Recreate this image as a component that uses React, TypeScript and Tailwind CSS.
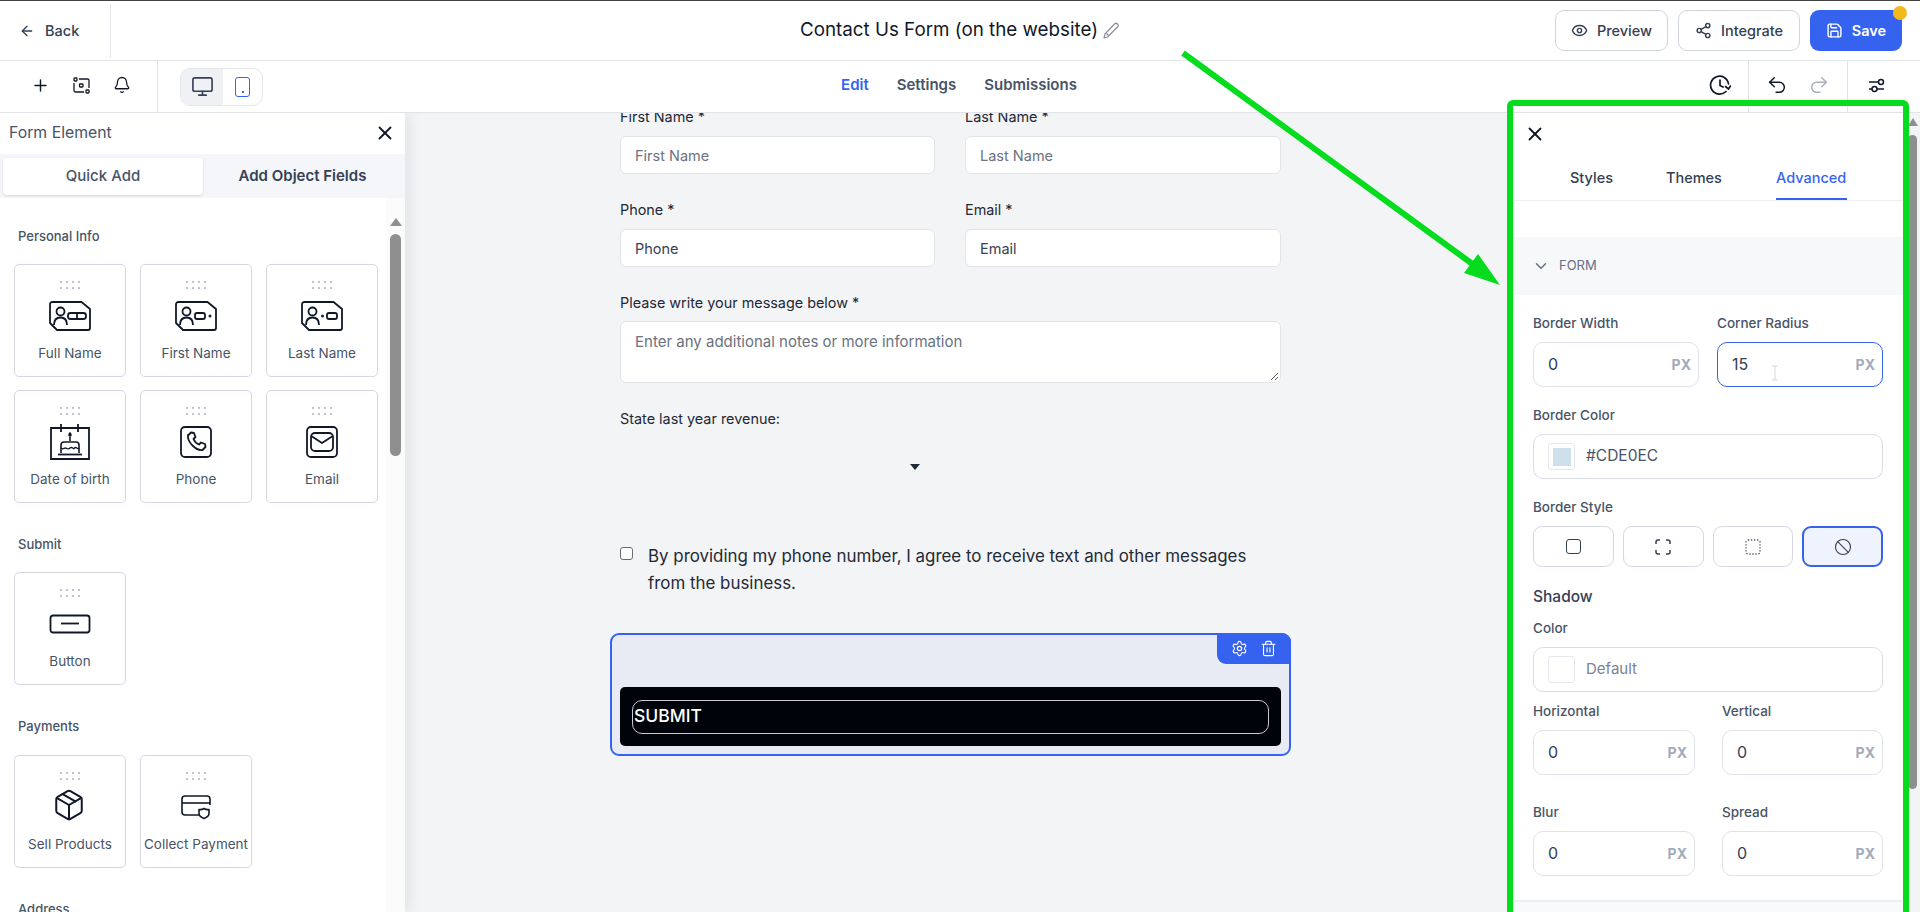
import React from "react";
import { ArrowLeft, Eye, Share2, Save, Plus, Bell, Monitor, X, ChevronDown, Undo2, Redo2, Settings, Trash2, Package, Ban } from "lucide-react";

const Dots = () => (
  <svg width="20" height="8" viewBox="0 0 20 8" className="shrink-0">
    {[1, 7, 13, 19].map((x) => [1, 7].map((y) => <circle key={`${x}${y}`} cx={x} cy={y} r="1.1" fill="#b6bccb" />))}
  </svg>
);

const IdIcon = ({ kind }: { kind: "full" | "first" | "last" }) => (
  <svg width="42" height="30" viewBox="0 0 42 30" fill="none" stroke="#101828" strokeWidth="1.8" strokeLinejoin="round">
    <path d="M3.500 1H32.500L41 8V27a2 2 0 0 1-2 2H8L1 22V3.500a2.500 2.500 0 0 1 2.500-2.500Z" />
    <circle cx="11.500" cy="10.500" r="4" />
    <path d="M5 24c0-5 2.500-7.500 6.500-7.500s6.500 2.500 6.500 7.500" />
    {kind === "full" && <><rect x="19" y="12" width="18" height="6" rx="2.500" /><path d="M28 12v6" /></>}
    {kind === "first" && <><rect x="20" y="12" width="10" height="6" rx="2" /><circle cx="35" cy="15" r=".6" /></>}
    {kind === "last" && <><rect x="26" y="12" width="10" height="6" rx="2" /><circle cx="21.500" cy="15" r=".6" /></>}
  </svg>
);

const CakeIcon = () => (
  <svg width="42" height="36" viewBox="0 0 42 36" fill="none" stroke="#101828" strokeWidth="1.6">
    <path d="M2 4H40V35H2Z" strokeWidth="1.800" />
    <path d="M12 0V8M29 0V8" strokeWidth="1.800" />
    <path d="M21 9c-1.500 1.500-1 3 0 3s1.500-1.500 0-3Z" fill="#101828" />
    <path d="M21 13v4" />
    <path d="M12 29V21a3 3 0 0 1 3-3H27a3 3 0 0 1 3 3V29" />
    <path d="M12 24c2 2 3 0 4.500 0s2 2 4.500 0 3 2 4.500 0 3 2 4.500 0" strokeWidth="1.300" />
    <path d="M9 30.500H33" strokeWidth="1.800" />
  </svg>
);

const PhoneIcon = () => (
  <svg width="32" height="32" viewBox="0 0 32 32" fill="none" stroke="#101828" strokeWidth="1.800" strokeLinejoin="round">
    <rect x="1" y="1" width="30" height="30" rx="4" />
    <path d="M8 9.500 11 6.500l3 .5 1.500 4-2 2c1 2.500 3 4.500 5.500 5.500l2-2 4 1.500.5 3-3 3c-3 .5-7-1.500-10-4.500s-5-7-4.500-10.500Z" />
  </svg>
);

const MailIcon = () => (
  <svg width="32" height="32" viewBox="0 0 32 32" fill="none" stroke="#101828" strokeWidth="1.800" strokeLinejoin="round">
    <rect x="1" y="1" width="30" height="30" rx="4" />
    <rect x="5" y="7" width="22" height="18" rx="4" />
    <path d="M6 10.500 16 17l10-6.500" />
  </svg>
);

const ButtonIcon = () => (
  <svg width="42" height="20" viewBox="0 0 42 20" fill="none" stroke="#101828" strokeWidth="1.800">
    <rect x="1.500" y="1.500" width="39" height="17" rx="2.500" />
    <path d="M12 9.500H30" />
  </svg>
);

const CardShieldIcon = () => (
  <svg width="32" height="26" viewBox="0 0 32 26" fill="none" stroke="#101828" strokeWidth="1.600" strokeLinejoin="round">
    <path d="M20 21H5a3 3 0 0 1-3-3V5a3 3 0 0 1 3-3H27a3 3 0 0 1 3 3V11" />
    <path d="M2 9H30" />
    <path d="M24 14.500c1.500 1 3.500 1.200 5 1v4c0 2.500-2.500 4-5 5-2.500-1-5-2.500-5-5v-4c1.500.2 3.500 0 5-1Z" />
  </svg>
);

const FieldsIcon = () => (
  <svg width="17" height="17" viewBox="0 0 17 17" fill="none" stroke="#101828" strokeWidth="1.300">
    <rect x="1" y="1" width="3" height="3" rx=".7" />
    <rect x="6.500" y="7" width="3.500" height="3" rx=".7" />
    <rect x="13" y="13" width="3" height="3" rx=".7" />
    <path d="M6 2H14.500a1.500 1.500 0 0 1 1.500 1.500V11M11 15H2.500A1.500 1.500 0 0 1 1 13.500V6" />
  </svg>
);

const HistoryIcon = () => (
  <svg width="22" height="22" viewBox="0 0 22 22" fill="none" stroke="#101828" strokeWidth="1.700" strokeLinecap="round">
    <path d="M19.500 10A9 9 0 1 0 17 17.500" />
    <path d="M11 6V11.500L14 13" />
    <path d="M16.500 12.500 19.500 15l2-3" />
  </svg>
);

const SlidersIcon = () => (
  <svg width="17" height="15" viewBox="0 0 17 15" fill="none" stroke="#101828" strokeWidth="1.500">
    <path d="M1 4H10M1 11H4M9 11H16" />
    <circle cx="13" cy="4" r="2.500" />
    <circle cx="6.500" cy="11" r="2.500" />
  </svg>
);

const PencilIcon = () => (
  <svg width="18" height="18" viewBox="0 0 18 18" fill="none" stroke="#8a8f98" strokeWidth="1.200" strokeLinejoin="round">
    <path d="M3 12 12.500 2a2 2 0 0 1 3 3L5.500 15 2 16Z" />
    <path d="M4.500 11.500 6.500 13.500" />
  </svg>
);

const cardClass = "w-[112px] h-[113px] rounded-[5px] border border-[#d5d8e3] bg-white flex flex-col items-center pt-[16px]";

const Card = ({ label, icon }: { label: string; icon: React.ReactNode }) => (
  <div className={cardClass}>
    <Dots />
    <div className="h-[49px] mt-[2px] flex items-center justify-center">{icon}</div>
    <div className="mt-[5px] text-[13.500px] leading-[16px] text-[#475467] whitespace-nowrap">{label}</div>
  </div>
);

const SectionTitle = ({ children, className }: { children: React.ReactNode; className: string }) => (
  <div className={`pl-[18px] text-[13px] leading-[20px] text-[#475467] font-medium ${className}`}>{children}</div>
);

const UnitInput = ({ value, focus }: { value: string; focus?: boolean }) => (
  <div className={`h-[45px] rounded-[10px] border bg-white flex items-center justify-between pl-[14px] pr-[7px] pb-[1px] ${focus ? "border-[#3563f0]" : "border-[#e0e2ea]"}`}>
    <span className="text-[16px] text-[#344054]">{value}</span>
    <span className="text-[14px] font-bold text-[#a3abbb]">PX</span>
  </div>
);

const PanelLabel = ({ children }: { children: React.ReactNode }) => (
  <div className="h-[20px] mb-[9px] text-[13.500px] leading-[20px] font-medium text-[#475467]">{children}</div>
);

const FormField = ({ label, placeholder, dark }: { label: string; placeholder: string; dark?: boolean }) => (
  <div>
    <div className="h-[20px] mb-[9px] text-[14.400px] leading-[20px] text-[#1f2937]">{label}</div>
    <div className={`h-[38px] rounded-[6px] border border-[#e2e4e9] bg-white flex items-center pl-[14px] pt-[1px] text-[14.500px] ${dark ? "text-[#374151]" : "text-[#6b7280]"}`}>{placeholder}</div>
  </div>
);

export default function App() {
  return (
    <div className="relative w-[1920px] h-[912px] overflow-hidden bg-white flex flex-col font-['Inter',sans-serif] text-[#101828]">
      <div className="h-[1px] shrink-0 bg-[#444444]" />

      <header className="h-[60px] shrink-0 border-b border-[#e4e5e8] grid grid-cols-[1fr_auto_1fr] items-center">
        <div className="h-full flex items-center">
          <div className="w-[111px] h-[54px] border-r border-[#e1e3e8] flex items-center pl-[19px] gap-[10px]">
            <ArrowLeft size={16} color="#344054" />
            <span className="text-[14.500px] font-medium text-[#344054]">Back</span>
          </div>
        </div>
        <div className="flex items-center gap-[4px]">
          <span className="text-[18.800px] text-[#101828]">Contact Us Form (on the website)</span>
          <PencilIcon />
        </div>
        <div className="flex justify-end items-center gap-[10px] pr-[18px]">
          <button className="h-[41px] w-[113px] rounded-[9px] border border-[#d0d5dd] flex items-center justify-center gap-[9px] text-[14.500px] font-medium text-[#344054]">
            <Eye size={17} />Preview
          </button>
          <button className="h-[41px] w-[122px] rounded-[9px] border border-[#d0d5dd] flex items-center justify-center gap-[9px] text-[14.500px] font-medium text-[#344054]">
            <Share2 size={17} />Integrate
          </button>
          <div className="relative">
            <button className="h-[41px] w-[92px] rounded-[9px] bg-[#3563f0] flex items-center justify-center gap-[9px] text-[14.500px] font-semibold text-white">
              <Save size={17} />Save
            </button>
            <span className="absolute -top-[4px] -right-[5px] w-[14px] h-[14px] rounded-full bg-[#f2b91d]" />
          </div>
        </div>
      </header>

      <div className="h-[52px] shrink-0 border-b border-[#e1e3e8] grid grid-cols-[1fr_auto_1fr] items-center">
        <div className="h-full flex items-center">
          <div className="w-[158px] h-full border-r border-[#e1e3e8] flex items-center pl-[31px] pb-[3px] gap-[23px]">
            <Plus size={19} strokeWidth={1.800} color="#101828" />
            <FieldsIcon />
            <Bell size={18} strokeWidth={1.700} color="#101828" />
          </div>
          <div className="ml-[22px] w-[83px] h-[38px] rounded-[10px] border border-[#e4e7ec] overflow-hidden flex">
            <div className="w-[42px] bg-[#f0f1f5] flex items-center justify-center"><Monitor size={23} strokeWidth={1.700} color="#344054" /></div>
            <div className="flex-1 flex items-center justify-center">
              <div className="w-[15px] h-[20px] rounded-[3px] border-[1.500px] border-[#3563f0] flex items-end justify-center pb-[3px]">
                <div className="w-[2px] h-[2px] bg-[#3563f0]" />
              </div>
            </div>
          </div>
        </div>
        <div className="flex items-center gap-[28px] pb-[2px] pr-[2px] text-[15px] font-semibold text-[#475467]">
          <span className="text-[#3563f0]">Edit</span>
          <span>Settings</span>
          <span>Submissions</span>
        </div>
        <div className="h-full flex justify-end items-center">
          <div className="h-full w-[56px] pb-[3px] flex items-center justify-center"><HistoryIcon /></div>
          <div className="h-full w-[100px] border-x border-[#e1e3e8] pb-[3px] flex items-center justify-center gap-[20px]">
            <Undo2 size={22} strokeWidth={1.600} color="#101828" />
            <Redo2 size={22} strokeWidth={1.600} color="#a9b0bb" />
          </div>
          <div className="h-full w-[72px] pb-[3px] flex items-center pl-[20px]"><SlidersIcon /></div>
        </div>
      </div>

      <main className="flex-1 min-h-0 flex overflow-hidden">
        <aside className="w-[405px] shrink-0 bg-white flex flex-col relative z-10 shadow-[4px_0_14px_rgba(16,24,40,0.08)] rounded-tr-[4px]">
          <div className="h-[41px] flex items-center justify-between pl-[9px] pr-[9px] pb-[1px]">
            <span className="text-[15.800px] text-[#475467]">Form Element</span>
            <X size={22} color="#101828" />
          </div>
          <div className="h-[44px] bg-[#f5f6f9] flex items-center pl-[3px]">
            <div className="w-[200px] h-[37px] rounded-[4px] bg-white shadow-sm flex items-center justify-center pt-[1px] text-[15px] font-medium text-[#475467]">Quick Add</div>
            <div className="flex-1 flex items-center justify-center pr-[3px] pt-[1px] text-[15px] font-semibold text-[#344054]">Add Object Fields</div>
          </div>
          <div className="flex-1 min-h-0 flex overflow-hidden">
            <div className="flex-1 overflow-hidden">
              <SectionTitle className="mt-[28px]">Personal Info</SectionTitle>
              <div className="ml-[14px] mt-[18px] grid grid-cols-[112px_112px_112px] gap-x-[14px] gap-y-[13px]">
                <Card label="Full Name" icon={<IdIcon kind="full" />} />
                <Card label="First Name" icon={<IdIcon kind="first" />} />
                <Card label="Last Name" icon={<IdIcon kind="last" />} />
                <Card label="Date of birth" icon={<CakeIcon />} />
                <Card label="Phone" icon={<PhoneIcon />} />
                <Card label="Email" icon={<MailIcon />} />
              </div>
              <SectionTitle className="mt-[31px]">Submit</SectionTitle>
              <div className="ml-[14px] mt-[18px]"><Card label="Button" icon={<ButtonIcon />} /></div>
              <SectionTitle className="mt-[31px]">Payments</SectionTitle>
              <div className="ml-[14px] mt-[19px] flex gap-[14px]">
                <Card label="Sell Products" icon={<Package size={34} strokeWidth={1.400} color="#101828" className="-mt-[3px] -ml-[2px]" />} />
                <Card label="Collect Payment" icon={<CardShieldIcon />} />
              </div>
              <SectionTitle className="mt-[31px]">Address</SectionTitle>
            </div>
            <div className="w-[19px] bg-[#fbfbfb] flex flex-col items-center pt-[20px]">
              <div className="w-0 h-0 border-x-[6px] border-x-transparent border-b-[8px] border-b-[#8f8f8f]" />
              <div className="mt-[8px] w-[11px] h-[222px] rounded-[6px] bg-[#8f8f8f]" />
            </div>
          </div>
        </aside>

        <section className="flex-1 min-w-0 bg-[#f3f4f6] overflow-hidden pl-[215px]">
          <div className="w-[661px] -mt-[6px]">
            <div className="grid grid-cols-[315px_316px] gap-x-[30px]">
              <FormField label="First Name *" placeholder="First Name" />
              <FormField label="Last Name *" placeholder="Last Name" />
            </div>
            <div className="grid grid-cols-[315px_316px] gap-x-[30px] mt-[26px]">
              <FormField label="Phone *" placeholder="Phone" dark />
              <FormField label="Email *" placeholder="Email" dark />
            </div>
            <div className="mt-[26px] h-[20px] mb-[8px] text-[14.400px] leading-[20px] text-[#1f2937]">Please write your message below *</div>
            <div className="relative h-[62px] rounded-[6px] border border-[#e2e4e9] bg-white pl-[14px] pt-[10px] text-[15px] leading-[20px] text-[#6b7280]">
              Enter any additional notes or more information
              <svg className="absolute right-[1px] bottom-[1px]" width="10" height="10" viewBox="0 0 10 10" stroke="#555" fill="none"><path d="M2 9 9 2M6 9 9 6" /></svg>
            </div>
            <div className="mt-[26px] h-[20px] text-[14.400px] leading-[20px] text-[#1f2937]">State last year revenue:</div>
            <div className="h-[76px] flex items-center pl-[290px]">
              <div className="w-0 h-0 border-x-[5px] border-x-transparent border-t-[6px] border-t-[#1f2937]" />
            </div>
            <div className="mt-[38px] flex gap-[15px]">
              <div className="mt-[4px] w-[13px] h-[13px] shrink-0 rounded-[3px] border border-[#6b6b6b] bg-white" />
              <p className="w-[612px] text-[16.900px] leading-[27px] text-[#1f2937]">By providing my phone number, I agree to receive text and other messages from the business.</p>
            </div>
            <div className="relative mt-[36px] -mx-[10px] h-[123px] rounded-[9px] border-2 border-[#3563f0] bg-[#e8ebf4] px-[8px] pt-[52px]">
              <div className="absolute -top-[2px] -right-[2px] w-[74px] h-[31px] rounded-bl-[9px] rounded-tr-[9px] bg-[#3563f0] flex items-center justify-center gap-[12px] text-white">
                <Settings size={17} strokeWidth={1.600} />
                <Trash2 size={17} strokeWidth={1.600} />
              </div>
              <div className="h-[59px] rounded-[5px] bg-[#01030a] px-[12px] flex items-center">
                <div className="w-full h-[34px] rounded-[10px] border border-[#c9cbd1] flex items-center pl-[1px] text-[17.500px] font-medium text-white">SUBMIT</div>
              </div>
            </div>
          </div>
        </section>

        <aside className="w-[388px] shrink-0 bg-white flex flex-col">
          <div className="h-[88px] shrink-0 border-b border-[#eceef2] flex flex-col">
            <div className="h-[43px] pl-[9px] flex items-center"><X size={22} color="#101828" /></div>
            <div className="flex-1 pl-[55px] flex text-[14.500px] font-medium text-[#344054]">
              <div className="w-[96px] pt-[12px]">Styles</div>
              <div className="w-[110px] pt-[12px]">Themes</div>
              <div className="w-[71px] h-[45px] pt-[12px] border-b-2 border-[#3563f0] text-[#3563f0]">Advanced</div>
            </div>
          </div>
          <div className="mt-[36px] h-[58px] shrink-0 bg-[#f7f8fa] pl-[17px] flex items-center gap-[9px]">
            <ChevronDown size={18} color="#667085" />
            <span className="text-[13px] text-[#667085]">FORM</span>
          </div>
          <div className="pl-[18px] pr-[20px] pt-[18px] flex-1">
            <div className="grid grid-cols-2 gap-x-[18px]">
              <div><PanelLabel>Border Width</PanelLabel><UnitInput value="0" /></div>
              <div className="relative">
                <PanelLabel>Corner Radius</PanelLabel>
                <UnitInput value="15" focus />
                <svg className="absolute left-[54px] top-[52px]" width="8" height="16" viewBox="0 0 8 16" fill="none" stroke="#d5d8de"><path d="M1 1H7M4 1V15M1 15H7" /></svg>
              </div>
            </div>
            <div className="mt-[18px]"><PanelLabel>Border Color</PanelLabel></div>
            <div className="h-[45px] rounded-[10px] border border-[#d9dce5] flex items-center pl-[14px] gap-[11px]">
              <div className="w-[27px] h-[27px] rounded-[3px] border border-[#e4e7ec] flex items-center justify-center"><div className="w-[18px] h-[18px] bg-[#cde0ec]" /></div>
              <span className="text-[15.500px] pb-[1px] text-[#475467]">#CDE0EC</span>
            </div>
            <div className="mt-[18px]"><PanelLabel>Border Style</PanelLabel></div>
            <div className="grid grid-cols-4 gap-x-[9px]">
              <div className="h-[41px] rounded-[9px] border border-[#d5d8e3] flex items-center justify-center"><div className="w-[15px] h-[15px] rounded-[3px] border-[1.500px] border-[#344054]" /></div>
              <div className="h-[41px] rounded-[9px] border border-[#d5d8e3] flex items-center justify-center">
                <svg width="16" height="16" viewBox="0 0 16 16" fill="none" stroke="#344054" strokeWidth="1.500"><path d="M1 5V3a2 2 0 0 1 2-2h2M11 1h2a2 2 0 0 1 2 2v2M15 11v2a2 2 0 0 1-2 2h-2M5 15H3a2 2 0 0 1-2-2v-2" /></svg>
              </div>
              <div className="h-[41px] rounded-[9px] border border-[#d5d8e3] flex items-center justify-center">
                <svg width="16" height="16" viewBox="0 0 16 16" fill="none" stroke="#475467" strokeWidth="1.300" strokeDasharray="1.300 1.700"><rect x="1" y="1" width="14" height="14" rx="2" /></svg>
              </div>
              <div className="h-[41px] rounded-[9px] border-2 border-[#3563f0] bg-[#eff3fd] flex items-center justify-center"><Ban size={18} strokeWidth={1.500} color="#344054" /></div>
            </div>
            <div className="mt-[18px] h-[24px] text-[15.500px] leading-[24px] font-medium text-[#344054]">Shadow</div>
            <div className="mt-[9px]"><PanelLabel>Color</PanelLabel></div>
            <div className="h-[45px] rounded-[10px] border border-[#d9dce5] flex items-center pl-[14px] gap-[11px]">
              <div className="w-[27px] h-[27px] rounded-[3px] border border-[#e4e7ec]" />
              <span className="text-[15px] pb-[1px] text-[#7a8296]">Default</span>
            </div>
            <div className="mt-[9px] grid grid-cols-[162px_161px] justify-between">
              <div><PanelLabel>Horizontal</PanelLabel><UnitInput value="0" /></div>
              <div><PanelLabel>Vertical</PanelLabel><UnitInput value="0" /></div>
            </div>
            <div className="mt-[27px] grid grid-cols-[162px_161px] justify-between">
              <div><PanelLabel>Blur</PanelLabel><UnitInput value="0" /></div>
              <div><PanelLabel>Spread</PanelLabel><UnitInput value="0" /></div>
            </div>
          </div>
          <div className="h-[12px] shrink-0 border-t-2 border-[#eceef2] bg-[#f9fafb]" />
        </aside>

        <div className="w-[17px] shrink-0 bg-[#f3f4f6] flex flex-col pl-[5px] pt-[5px]">
          <div className="w-0 h-0 border-x-[5px] border-x-transparent border-b-[8px] border-b-[#8f8f8f]" />
          <div className="mt-[9px] w-[9px] h-[654px] rounded-[5px] bg-[#8f8f8f]" />
        </div>
      </main>

      <div className="absolute left-[1507px] top-[100px] w-[402px] h-[840px] rounded-[6px] border-[6px] border-[#05dc1e] pointer-events-none" />
      <svg className="absolute left-0 top-0 pointer-events-none" width="1920" height="912" fill="none">
        <path d="M1183 53 1478 268" stroke="#05dc1e" strokeWidth="6" />
        <path d="M1500 285 1478 254 1464 273Z" fill="#05dc1e" />
      </svg>
    </div>
  );
}
